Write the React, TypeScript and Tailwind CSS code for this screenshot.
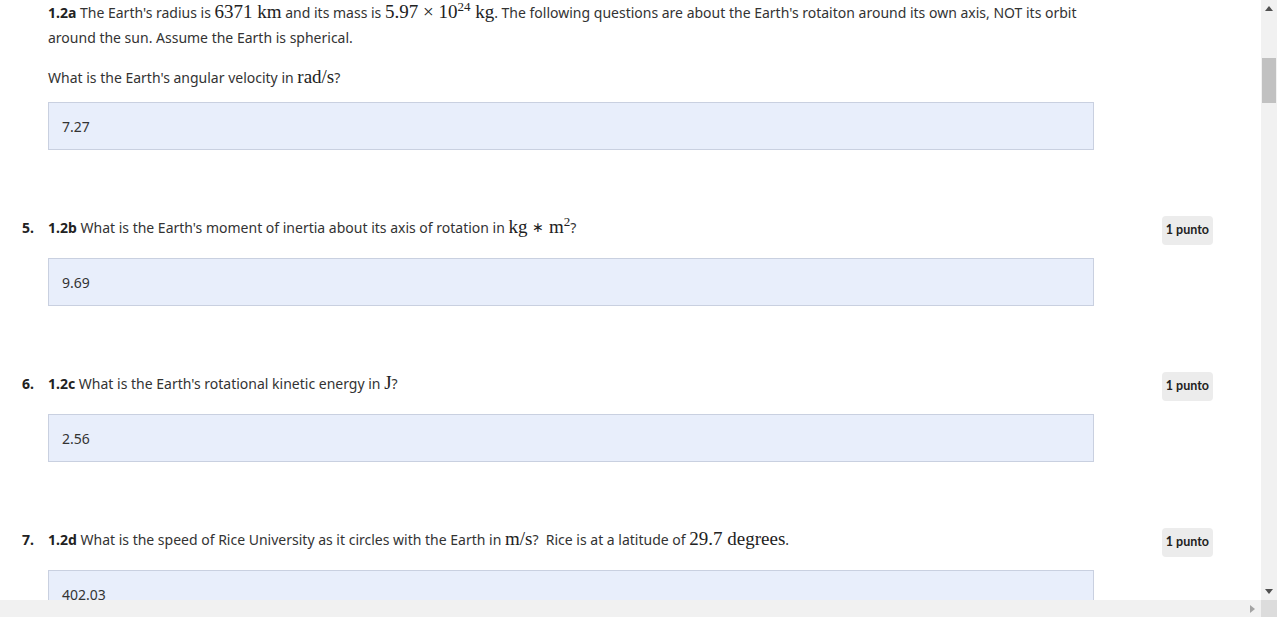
import React from 'react';

const sans = { fontFamily: '"Noto Sans", Lato, sans-serif' };

function M({ children }: { children: React.ReactNode }) {
  return (
    <span className="font-['Liberation_Serif',serif] text-[19px] leading-none text-[#222]">
      {children}
    </span>
  );
}

function Sup({ children }: { children: React.ReactNode }) {
  return (
    <span className="relative -top-[7px] text-[13px] leading-none">
      {children}
    </span>
  );
}

function Answer({ value }: { value: string }) {
  return (
    <div className="ml-[48px] w-[1046px] h-[48px] bg-[#e8eefb] border border-[#c9d0e0] flex items-center pl-[13px] text-[14px] text-[#333]">
      {value}
    </div>
  );
}

function Badge() {
  return (
    <div className="mr-[48px] h-[29px] px-[4px] rounded-[4px] bg-[#ececec] flex items-center text-[12.5px] font-bold text-[#222] font-['Lato',sans-serif]">
      1 punto
    </div>
  );
}

function Question({
  num,
  tag,
  children,
}: {
  num: string;
  tag: string;
  children: React.ReactNode;
}) {
  return (
    <div className="flex items-start">
      <div className="w-[48px] pl-[22px] font-bold text-[14px] leading-[24px] text-[#222]">
        {num}
      </div>
      <div className="flex-1 text-[14px] leading-[24px] text-[#333]">
        <b className="text-[#222]">{tag}</b> {children}
      </div>
      <Badge />
    </div>
  );
}

export default function App() {
  return (
    <div
      className="w-[1277px] h-[617px] flex flex-col overflow-hidden bg-white"
      style={sans}
    >
      <div className="flex h-[600px]">
        <div className="w-[1261px] h-[600px] overflow-hidden">
          <div className="pl-[48px] w-[1094px] text-[14px] leading-[25px] text-[#333]">
            <p>
              <b className="text-[#222]">1.2a</b> The Earth's radius is{' '}
              <M>6371 km</M> and its mass is{' '}
              <M>
                5.97 × 10<Sup>24</Sup> kg
              </M>
              . The following questions are about the Earth's rotaiton around
              its own axis, NOT its orbit around the sun. Assume the Earth is
              spherical.
            </p>
            <p className="mt-[15px]">
              What is the Earth's angular velocity in <M>rad/s</M>?
            </p>
          </div>
          <div className="mt-[12px]">
            <Answer value="7.27" />
          </div>

          <div className="mt-[66px]">
            <Question num="5." tag="1.2b">
              What is the Earth's moment of inertia about its axis of rotation in{' '}
              <M>
                kg <span className="text-[14px] relative -top-[1px]">∗</span> m<Sup>2</Sup>
              </M>
              ?
            </Question>
          </div>
          <div className="mt-[13px]">
            <Answer value="9.69" />
          </div>

          <div className="mt-[66px]">
            <Question num="6." tag="1.2c">
              What is the Earth's rotational kinetic energy in <M>J</M>?
            </Question>
          </div>
          <div className="mt-[13px]">
            <Answer value="2.56" />
          </div>

          <div className="mt-[66px]">
            <Question num="7." tag="1.2d">
              What is the speed of Rice University as it circles with the Earth in{' '}
              <M>m/s</M>? &nbsp;Rice is at a latitude of <M>29.7 degrees</M>.
            </Question>
          </div>
          <div className="mt-[13px]">
            <Answer value="402.03" />
          </div>
        </div>
        <div className="w-[16px] h-[600px] bg-[#f1f1f1] flex flex-col items-center">
          <div className="h-[17px] flex items-center justify-center">
            <svg width="8" height="5" viewBox="0 0 8 5">
              <path d="M0 5 L4 0 L8 5 Z" fill="#505050" />
            </svg>
          </div>
          <div className="mt-[41px] w-[14px] h-[45px] bg-[#c1c1c1]" />
          <div className="flex-1" />
          <div className="h-[17px] flex items-center justify-center">
            <svg width="8" height="5" viewBox="0 0 8 5">
              <path d="M0 0 L4 5 L8 0 Z" fill="#505050" />
            </svg>
          </div>
        </div>
      </div>
      <div className="flex h-[17px]">
        <div className="w-[1261px] bg-[#f1f1f1] flex items-center justify-end pr-[6px]">
          <svg width="5" height="8" viewBox="0 0 5 8">
            <path d="M0 0 L5 4 L0 8 Z" fill="#a3a3a3" />
          </svg>
        </div>
        <div className="w-[16px] bg-[#dcdcdc]" />
      </div>
    </div>
  );
}
